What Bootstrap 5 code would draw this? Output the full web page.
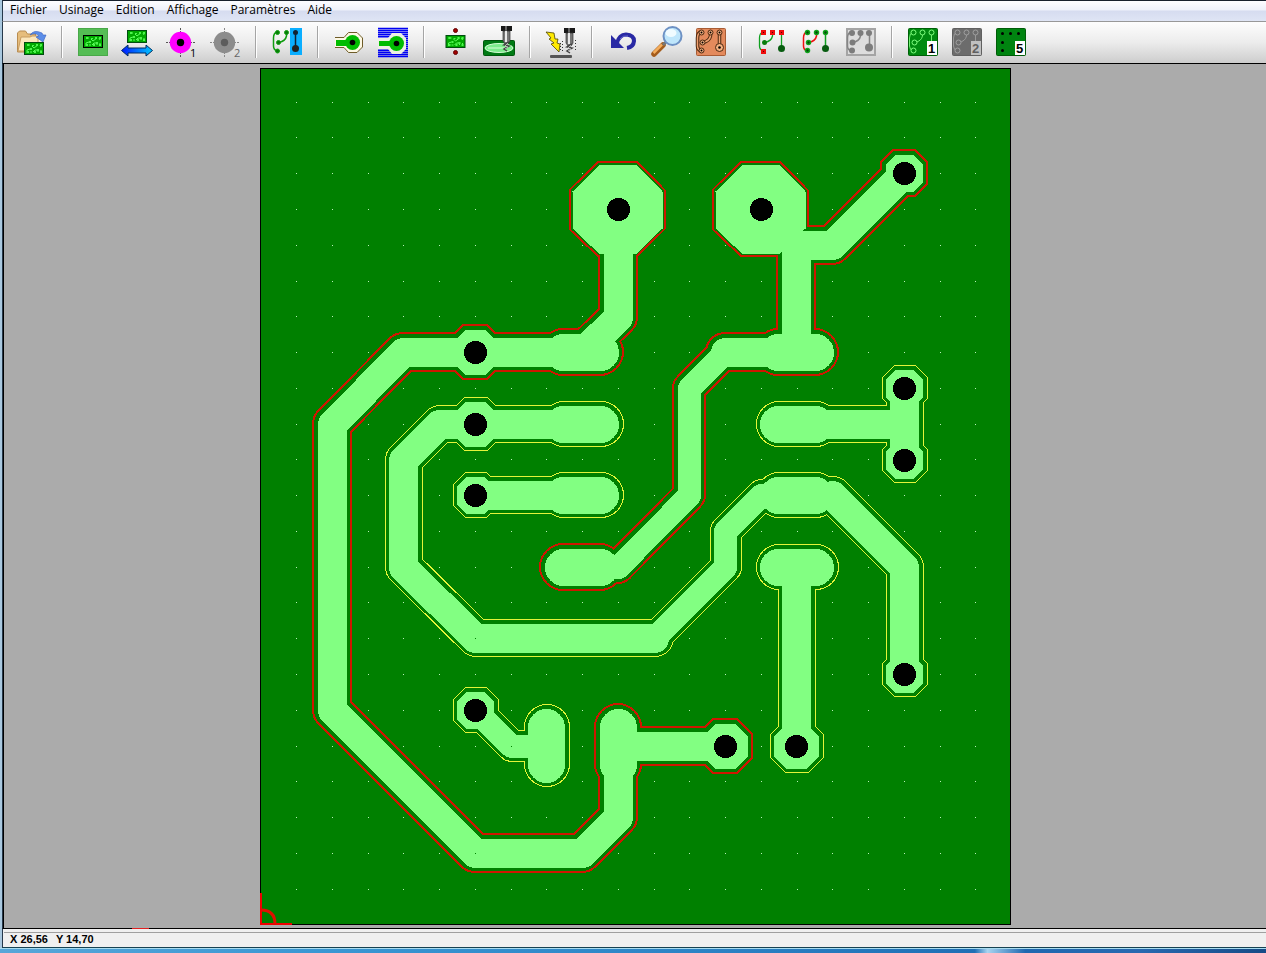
<!DOCTYPE html>
<html lang="fr">
<head>
<meta charset="utf-8">
<meta name="viewport" content="width=device-width, initial-scale=1">
<title>Usinage de circuits</title>
<link rel="stylesheet" href="https://cdn.jsdelivr.net/npm/bootstrap@5.3.0/dist/css/bootstrap.min.css">
<script src="https://cdn.jsdelivr.net/npm/bootstrap@5.3.0/dist/js/bootstrap.bundle.min.js"></script>
<style>
body { font-family: "Open Sans", "Noto Sans", sans-serif; font-size: 12px; color: #000; background: #f0f0f0; }
.window-frame { border-left: 2px solid #a9c8df; min-height: 0; }
.window-frame > * { border-left: 1px solid #26384a; }
.menu-strip { height: 21px; padding-left: 1px; border-top: 1px solid #17202c; background: linear-gradient(#fdfdff, #eef1fa 45%, #d6dcf0 50%, #dfe5f5); }
.menu-strip button { font-size: 12px; line-height: 18px; height: 18px; padding: 0 6px; color: #000; background: none; border: 0; }
.tool-strip { height: 42px; padding-left: 6px; border-top: 1px solid #989898; background: linear-gradient(#fdfdfd, #ececec 50%, #cdcdcd); }
.tool-strip button { width: 44px; height: 40px; padding: 4px 6px; border: 0; background: none; }
.tool-strip svg { display: block; width: 32px; height: 32px; overflow: visible; }
.tool-gap { width: 18px; padding: 4px 8px; height: 40px; }
.tool-gap::before { content: ""; display: block; width: 2px; height: 100%; background: linear-gradient(90deg, #a5a5a5 50%, #fff 50%); }
.work-area { background: #ababab; border-top: 1px solid #000; border-bottom: 1px solid #000; box-shadow: inset 1px 0 #000; min-height: 0; padding-left: 2px; }
.work-area svg { max-width: 100%; max-height: 100%; width: 751px; height: 857px; }
.axis-mark { bottom: -1px; left: 129px; width: 17px; height: 1px; background: #e02020; }
.status-strip { height: 19px; background: #f0f0f0; border-bottom: 1px solid #174252; padding-left: 1px; }
.status-strip output { margin-top: 3px; padding-left: 6px; gap: 8px; border-top: 1px solid #a0a0a0; font: bold 11px/12px "Liberation Sans", Arial, sans-serif; }
.desk-edge { height: 5px; border-top: 1px solid #a8dcf0; background: linear-gradient(90deg, #58a6d8 0, #3a97d3 25%, #2c83c5 55%, #1f6fb5 77%, #a8d4f0 78%, #1f68b0 81%, #2869b0 90%, #164b86); }
/* Each net is drawn three times: contour, clearance, copper. */
.net-contour-cut { --c: #cf1600; --g: 11px; }
.net-contour { --c: #e4f43a; --g: 9px; }
.net-clearance { --c: #008000; --g: 7px; }
.net-copper { --c: #82ff82; --g: 0px; }
.trk, .trk-thin, .oval { fill: none; stroke: var(--c); stroke-linecap: round; stroke-linejoin: round; }
.trk { stroke-width: calc(29px + var(--g)); }
.trk-thin { stroke-width: calc(23px + var(--g)); }
.oval { stroke-width: calc(37px + var(--g)); }
.oct { fill: var(--c); stroke: var(--c); stroke-width: var(--g); }
.oct-big { fill: var(--c); stroke: var(--c); stroke-width: max(0px, calc(var(--g) - 4px)); }
.icon-num { font: 11px "Open Sans", sans-serif; }
.icon-num-b { font: bold 13px "Liberation Sans", Arial, sans-serif; }
</style>
</head>
<body class="vh-100 overflow-hidden">

<svg width="0" height="0" class="position-absolute" aria-hidden="true">
  <defs>
    <symbol id="mini" viewBox="0 0 20 13" overflow="visible">
      <rect x=".5" y=".5" width="19" height="12" fill="#00a800" stroke="#004c10"/>
      <path d="M3 11V8l3-1M3 3h3M8 4l2 2 4-3M9 10l2-2h3v2M6 10h2M16 3l1 2M17 8v2" fill="none" stroke="#5cff5c"/>
      <path d="M3 2h2v2H3zM8 3h2v1H8zM12 2h2v2h-2zM16 2h2v2h-2zM6 6h2v2H6zM13 7h2v2h-2zM3 9h2v2H3zM10 9h2v2h-2zM16 9h2v2h-2z" fill="#4cf34c"/>
    </symbol>
    <symbol id="drill" viewBox="0 0 12 26" overflow="visible">
      <path d="M0 0h11v5H0z" fill="#181818"/><path d="M4 0h2v5H4z" fill="#666"/>
      <path d="M2 5h7v10l-2 3H4l-2-3z" fill="#777" stroke="#333" stroke-width=".7"/><path d="M4 5h2v11H4z" fill="#e8e8e8"/>
      <path d="M8 16l-5 3 5 1-5 3 3 2" fill="none" stroke="#444" stroke-width="1.5"/><path d="M7 17l-3 3 3 1-3 2" fill="none" stroke="#ddd" stroke-width=".7"/>
    </symbol>
    <g id="links" fill="none"><path d="M6 6Q2.500 7 2.500 12v8q0 4 4 5M15.500 6v4q-1 5-7.500 6.500M24.500 6v16"/></g>
    <g id="rings"><circle cx="6.500" cy="6.500" r="2.500"/><circle cx="15.500" cy="6.500" r="2.500"/><circle cx="24.500" cy="6.500" r="2.500"/><circle cx="7.500" cy="16.500" r="2.500"/><circle cx="6.500" cy="24.500" r="2.500"/></g>
  </defs>
</svg>

<div class="d-flex flex-column h-100">
<div class="window-frame d-flex flex-column flex-grow-1">
  <nav class="menu-strip d-flex flex-shrink-0" aria-label="Menu">
    <button type="button">Fichier</button><button type="button">Usinage</button><button type="button">Edition</button><button type="button">Affichage</button><button type="button">Paramètres</button><button type="button">Aide</button>
  </nav>

  <div class="tool-strip d-flex align-items-start flex-shrink-0" role="toolbar" aria-label="Outils">
    <button type="button" aria-label="Ouvrir"><svg viewBox="0 0 32 32">
      <path d="M2.500 7l2-2h6l2 3h8v18H2.500z" fill="#e6bd7c" stroke="#b88c50"/><path d="M6 11h9l2-1h6v15H3z" fill="#fbe6bc" stroke="#c89c60"/>
      <path d="M15 9q4-6 12-2l1 2h3l-3 7-7-5 3-1q-3-4-9-1z" fill="#5b8de8" stroke="#3560c0" stroke-width=".6"/>
      <use href="#mini" x="9" y="16" width="20" height="13"/></svg></button>
    <span class="tool-gap"></span>
    <button type="button" aria-label="Platine"><svg viewBox="0 0 32 32"><rect x="1" y="2" width="30" height="28" rx="1" fill="#55bd55"/><rect x="1.500" y="2.500" width="29" height="27" fill="none" stroke="#49a849"/><use href="#mini" x="6" y="9" width="20" height="13"/><rect x="6.500" y="9.500" width="19" height="12" fill="none" stroke="#000"/></svg></button>
    <button type="button" aria-label="Retourner"><svg viewBox="0 0 32 32">
      <linearGradient id="blu"><stop stop-color="#0018ff"/><stop offset="1" stop-color="#00c8ff"/></linearGradient>
      <use href="#mini" x="6" y="4" width="20" height="13"/><path d="M.5 24.500L7 19v3h18v-3l6.500 5.500L25 30v-3H7v3z" fill="url(#blu)" stroke="#002a60"/></svg></button>
    <button type="button" aria-label="Point 1"><svg viewBox="0 0 32 32"><path d="M1 16.500h30M15.500 2v30" stroke="#555" stroke-dasharray="2 1"/><circle cx="15.500" cy="16.500" r="10.700" fill="#f0f"/><circle cx="15.500" cy="16.500" r="3.700"/><text x="25" y="31" class="icon-num">1</text></svg></button>
    <button type="button" aria-label="Point 2"><svg viewBox="0 0 32 32"><path d="M1 16.500h30M15.500 2v30" stroke="#888" stroke-dasharray="2 1"/><circle cx="15.500" cy="16.500" r="10.700" fill="#8c8c8c"/><circle cx="15.500" cy="16.500" r="3.700" fill="#5c5c5c"/><text x="25" y="31" class="icon-num" fill="#666">2</text></svg></button>
    <span class="tool-gap"></span>
    <button type="button" aria-label="Sélection"><svg viewBox="0 0 32 32"><rect x="19" y="2" width="12" height="27" fill="#0aaeff"/><path d="M6 6Q2.500 7 2.500 12v8q0 4 4 5M15.500 6v4q-1 5-7.500 6.500" fill="none" stroke="#109c10" stroke-width="1.500"/><g fill="#087c08" stroke="#10a010"><circle cx="6.500" cy="6.500" r="2"/><circle cx="15.500" cy="6.500" r="2"/><circle cx="7.500" cy="16.500" r="2"/><circle cx="6.500" cy="25" r="2"/></g><path d="M24.500 6v17" stroke="#123" stroke-width="1.500"/><circle cx="24.500" cy="6.500" r="2.500" fill="#123"/><circle cx="24.500" cy="22.500" r="3.500" fill="#222"/></svg></button>
    <span class="tool-gap"></span>
    <button type="button" aria-label="Contour"><svg viewBox="0 0 32 32"><path d="M2 11.500h9l4.500-5h8.500l5.500 5.500v9l-5.500 5.500h-8.500l-4.500-5H2" fill="#fdf8e4" stroke="#6e5c28"/><path d="M3 14h11v6H3z" fill="#00bc00"/><circle cx="19.500" cy="16.500" r="7.500" fill="#00bc00"/><circle cx="19.500" cy="16.500" r="2.800"/></svg></button>
    <button type="button" aria-label="Surfaçage"><svg viewBox="0 0 32 32"><path d="M1 2.500h30M1 4.500h30M1 6.500h30M1 8.500h30M1 10.500h30M1 12.500h30M1 14.500h30M1 16.500h30M1 18.500h30M1 20.500h30M1 22.500h30M1 24.500h30M1 26.500h30M1 28.500h30M1 30.500h30" fill="none" stroke="#0000f4" stroke-width="1.300"/><path d="M1 12h10l4-5h9l5 5v11l-5 5h-9l-4-5H1z" fill="#eef0e4"/><path d="M2 15h12v5H2z" fill="#00bc00"/><circle cx="19.500" cy="17.500" r="7.500" fill="#00bc00"/><circle cx="19.500" cy="17.500" r="2.800"/></svg></button>
    <span class="tool-gap"></span>
    <button type="button" aria-label="Repères"><svg viewBox="0 0 32 32"><use href="#mini" x="6" y="9" width="21" height="13"/><g fill="#a00000" stroke="#600"><circle cx="16.500" cy="4.500" r="2"/><circle cx="16.500" cy="26.500" r="2"/></g></svg></button>
    <button type="button" aria-label="Fraiser"><svg viewBox="0 0 32 32"><rect x=".5" y="14.500" width="31" height="15" rx="1" fill="#007a14" stroke="#00560c"/><ellipse cx="16" cy="22" rx="14" ry="4.500" fill="#7cec8c" stroke="#d6ffd6"/><path d="M5 22h18" stroke="#d6ffd6"/><use href="#drill" x="18" y="0" width="12" height="26"/></svg></button>
    <span class="tool-gap"></span>
    <button type="button" aria-label="Perçage rapide"><svg viewBox="0 0 32 32"><path d="M1 6l8 1 1 6h3l-1 4 3 1-1 8-8-8 3-1-5-4 2-1z" fill="#ffea00" stroke="#4c4400" stroke-width=".8"/><rect x="5" y="29" width="22" height="3" rx="1" fill="#555"/><use href="#drill" x="19" y="1" width="12" height="28"/><path d="M17.500 15v12M30.500 14v12M15.500 17v7" stroke="#333" stroke-dasharray="1 2" fill="none"/></svg></button>
    <span class="tool-gap"></span>
    <button type="button" aria-label="Annuler"><svg viewBox="0 0 32 32"><path d="M10 17Q12 9 19 8.500q8 .5 8 6.500-.5 6-7 7" fill="none" stroke="#2929a4" stroke-width="4"/><path d="M4 9v13h13l-4-4-5-5z" fill="#2929a4"/><path d="M13 13q3-4 8-3" fill="none" stroke="#6b6bd0"/></svg></button>
    <button type="button" aria-label="Loupe"><svg viewBox="0 0 32 32"><path d="M3 28L12 19" stroke="#a45c1c" stroke-width="5.500" stroke-linecap="round"/><path d="M2.500 27L11 18.500" stroke="#f4ad5c" stroke-width="2.500"/><path d="M12 19l3-3" stroke="#777" stroke-width="3"/><circle cx="21.500" cy="10" r="9" fill="#bfe6fb" stroke="#6d91c4" stroke-width="2"/><ellipse cx="20" cy="7" rx="5.500" ry="4" fill="#f0fbff"/></svg></button>
    <button type="button" aria-label="Pistes"><svg viewBox="0 0 32 32"><rect x="1.500" y="2.500" width="29" height="27" rx="1" fill="#e38a5c" stroke="#a85c34"/><use href="#links" stroke="#4a2810" stroke-width="3.500"/><use href="#links" stroke="#f0a070" stroke-width="1.500"/><use href="#rings" fill="#f4b080" stroke="#4a2810"/><circle cx="24.500" cy="21.500" r="4" fill="#f4b080" stroke="#4a2810"/><g><circle cx="6.500" cy="6.500" r="1"/><circle cx="15.500" cy="6.500" r="1"/><circle cx="24.500" cy="6.500" r="1"/><circle cx="7.500" cy="16.500" r="1"/><circle cx="6.500" cy="24.500" r="1"/><circle cx="24.500" cy="21.500" r="1.300"/></g></svg></button>
    <span class="tool-gap"></span>
    <button type="button" aria-label="Pastilles"><svg viewBox="0 0 32 32"><use href="#links" stroke="#10a020" stroke-width="1.300"/><path d="M4 4h5v5H4zM13 4h5v5h-5zM22 4h5v5h-5zM4 23h5v5H4z" fill="#f00c0c"/><path d="M6 6h1v1H6zM15 6h1v1h-1zM24 6h1v1h-1zM6 25h1v1H6z" fill="#500"/><circle cx="7.500" cy="16.500" r="2.500" fill="#0a7c0a"/><circle cx="24.500" cy="22.500" r="3.500" fill="#085c10"/></svg></button>
    <button type="button" aria-label="Liaisons"><svg viewBox="0 0 32 32"><path d="M6 6Q2.500 7 2.500 12v8q0 4 4 5M15.500 6v4q-1 5-7.500 6.500" fill="none" stroke="#f01010" stroke-width="1.500"/><path d="M24.500 6v16" stroke="#10a020" stroke-width="1.500"/><g fill="#054c0a" stroke="#10a41c" stroke-width="1.500"><circle cx="6.500" cy="6.500" r="2"/><circle cx="15.500" cy="6.500" r="2"/><circle cx="24.500" cy="6.500" r="2"/><circle cx="7.500" cy="16.500" r="2"/><circle cx="6.500" cy="24.500" r="2"/></g><circle cx="24.500" cy="22.500" r="3.500" fill="#085c10"/></svg></button>
    <button type="button" aria-label="Pistes grises"><svg viewBox="0 0 32 32"><rect x="2" y="3" width="28" height="26" fill="#ddd" stroke="#a4a4a4" stroke-width="2"/><use href="#links" stroke="#858585" stroke-width="1.500"/><g fill="#7c7c7c"><circle cx="7" cy="7" r="3"/><circle cx="15.500" cy="7" r="3"/><circle cx="24" cy="7" r="3"/><circle cx="7.500" cy="16.500" r="3"/><circle cx="7" cy="24.500" r="3"/><circle cx="24" cy="21.500" r="4"/></g></svg></button>
    <span class="tool-gap"></span>
    <button type="button" aria-label="Couche 1"><svg viewBox="0 0 32 32"><rect x="1.500" y="2.500" width="29" height="27" rx="1" fill="#008a10" stroke="#006008"/><use href="#links" stroke="#70f070"/><use href="#rings" fill="#008a10" stroke="#80ff80"/><path d="M20 15h10v14H20z" fill="#fff"/><text x="21" y="27" class="icon-num-b">1</text></svg></button>
    <button type="button" aria-label="Couche 2"><svg viewBox="0 0 32 32"><rect x="1.500" y="2.500" width="29" height="27" rx="1" fill="#6c6c6c" stroke="#606060"/><use href="#links" stroke="#999"/><use href="#rings" fill="#6c6c6c" stroke="#a0a0a0"/><path d="M20 15h10v14H20z" fill="#c0c0c0"/><text x="21" y="27" class="icon-num-b" fill="#606060">2</text></svg></button>
    <button type="button" aria-label="Couche 5"><svg viewBox="0 0 32 32"><rect x="1.500" y="2.500" width="29" height="27" rx="1" fill="#008410" stroke="#005c08"/><g><circle cx="7.500" cy="7.500" r="1.500"/><circle cx="15.500" cy="7.500" r="1.500"/><circle cx="23.500" cy="7.500" r="1.500"/><circle cx="7.500" cy="16.500" r="1.500"/><circle cx="7.500" cy="24.500" r="1.500"/></g><path d="M20 15h10v14H20z" fill="#fff"/><text x="21" y="27" class="icon-num-b">5</text></svg></button>
  </div>

  <main class="work-area d-flex flex-grow-1 justify-content-center align-items-center position-relative">
    <svg viewBox="260 68 751 857" role="img" aria-label="Circuit imprimé" shape-rendering="crispEdges">
      <defs>
        <path id="o37" d="M-9-18.500H9L18.500-9V9L9 18.500H-9L-18.500 9V-9z"/>
        <path id="o45" d="M-10-22.500H10L22.500-10V10L10 22.500H-10L-22.500 10V-10z"/>
        <path id="o89" d="M-18-44.500H19L45-18V19L19 44.500H-18L-45 19V-18z"/>
        <g id="netA">
          <path class="trk" d="M618 209V317L582 352H403L332 424V710L475 853H582L618 817V746H725"/>
          <path class="oval" d="M563 352H600M618 727V764"/>
          <use class="oct" href="#o45" x="475" y="352"/><use class="oct" href="#o45" x="725" y="746"/><use class="oct-big" href="#o89" x="617" y="209"/>
        </g>
        <g id="netB">
          <path class="trk" d="M904 173L832 245H796V352H725"/>
          <path class="trk-thin" d="M725 352L689 388V495L618 567"/>
          <path class="oval" d="M778 352H815M563 567H600"/>
          <use class="oct" href="#o37" x="904" y="173"/><use class="oct-big" href="#o89" x="760" y="209"/>
        </g>
        <g id="netC">
          <path class="trk" d="M582 424H439L403 460V567L475 638H654M832 495L904 567V674"/>
          <path class="trk-thin" d="M654 638L725 567V531L761 495"/>
          <path class="oval" d="M563 424H600M778 495H815"/>
          <use class="oct" href="#o45" x="475" y="424"/><use class="oct" href="#o37" x="904" y="674"/>
          <path class="trk" d="M475 495H582"/><path class="oval" d="M563 495H600"/><use class="oct" href="#o37" x="475" y="495"/>
          <path class="trk" d="M796 424H904M904 388V460"/><path class="oval" d="M778 424H815"/><use class="oct" href="#o37" x="904" y="388"/><use class="oct" href="#o37" x="904" y="460"/>
          <path class="trk" d="M796 567V746"/><path class="oval" d="M778 567H815"/><use class="oct" href="#o45" x="796" y="746"/>
          <path class="trk-thin" d="M475 710L511 746H546"/><path class="oval" d="M546 727V764"/><use class="oct" href="#o37" x="475" y="710"/>
        </g>
      </defs>
      <rect x="260" y="68" width="751" height="857" fill="#000"/>
      <rect x="261" y="69" width="749" height="855" fill="#008000"/>
      <g id="grid" fill="#b8f0b8"></g>
      <g>
        <g class="net-contour-cut"><use href="#netA"/><use href="#netB"/></g>
        <g class="net-clearance"><use href="#netA"/><use href="#netB"/></g>
      </g>
      <g transform="translate(1 0)">
        <g class="net-contour"><use href="#netC"/></g>
        <g class="net-clearance"><use href="#netC"/></g>
      </g>
      <g transform="translate(.5 .5)">
        <g class="net-copper"><use href="#netA"/><use href="#netB"/><use href="#netC"/></g>
        <g id="holes" fill="#000"></g>
      </g>
      <path d="M261 893V924H292" fill="none" stroke="#f00000" stroke-width="2"/>
      <path d="M261 910Q275 910 275 924" fill="none" stroke="#e01000" stroke-width="3" shape-rendering="auto"/>
    </svg>
    <span class="axis-mark position-absolute"></span>
  </main>

  <footer class="status-strip flex-shrink-0"><output class="d-flex"><span>X 26,56</span><span>Y 14,70</span></output></footer>
</div>
<div class="desk-edge flex-shrink-0"></div>
</div>

<script>
const NS = 'http://www.w3.org/2000/svg';
function add(parent, tag, attrs) {
  const el = document.createElementNS(NS, tag);
  for (const k in attrs) el.setAttribute(k, attrs[k]);
  parent.appendChild(el);
}
const grid = document.getElementById('grid');
for (let i = 0; i < 20; i++)
  for (let j = 0; j < 23; j++)
    add(grid, 'rect', { x: Math.floor(296.6 + i * 35.75), y: Math.floor(102.2 + j * 35.77), width: 1, height: 1 });
const holes = document.getElementById('holes');
[[618,209],[761,209],[904,173],[475,352],[475,424],[475,495],[904,388],[904,460],[904,674],[475,710],[725,746],[796,746]]
  .forEach(([cx, cy]) => add(holes, 'circle', { cx, cy, r: 11.5 }));
</script>
</body>
</html>
